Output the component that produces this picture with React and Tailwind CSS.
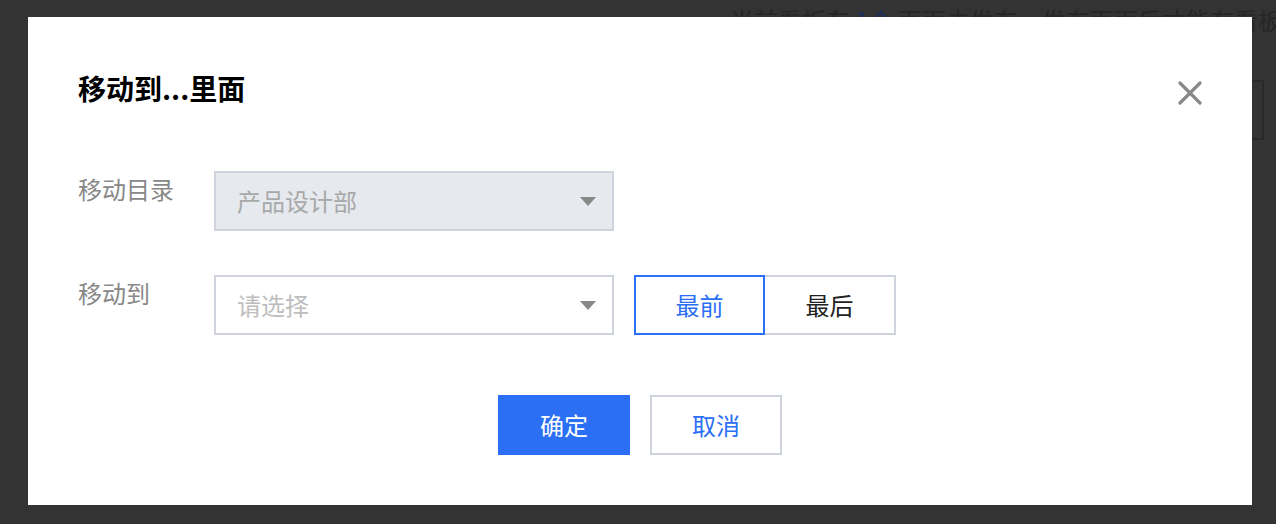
import React, { useState } from 'react';

const font = { fontFamily: '"Noto Sans CJK SC", "Noto Sans", sans-serif' };

function Caret() {
  return (
    <svg width="16" height="9" viewBox="0 0 16 9" className="shrink-0">
      <path d="M0 0 H16 L8 9 Z" fill="#888888" />
    </svg>
  );
}

function Select({ value, placeholder, disabled }) {
  return (
    <div
      className={`w-[400px] h-[60px] border-2 border-[#cfd3db] flex items-center justify-between pl-[21px] pr-[16px] ${
        disabled ? 'bg-[#e6e9ee]' : 'bg-white'
      }`}
    >
      <span className={`text-[24px] leading-[36px] ${disabled ? 'text-[#a8a8a8]' : 'text-[#bdbdbd]'}`}>
        {value || placeholder}
      </span>
      <Caret />
    </div>
  );
}

export default function App() {
  const [pos, setPos] = useState('first');

  return (
    <div className="relative w-[1276px] h-[524px] overflow-hidden bg-[#333333]" style={font}>
      {/* page behind the overlay */}
      <div className="absolute top-[2px] left-[730px] whitespace-nowrap text-[24px] leading-[36px] text-[#262626]">
        当前看板有 <span className="text-[#1c2e5c]">1个</span> 页面未发布，发布页面后才能在看板
      </div>
      <div className="absolute top-[80px] left-[1100px] w-[164px] h-[60px] border-2 border-[#292929]" />

      {/* modal */}
      <div className="absolute left-[28px] top-[17px] w-[1224px] h-[488px] bg-white px-[50px] pt-[50px] pb-[50px] flex flex-col">
        <div className="flex items-center justify-between h-[42px]">
          <h1 className="text-[28px] leading-[42px] font-bold text-black">移动到...里面</h1>
          <svg width="24" height="24" viewBox="0 0 24 24" className="mt-[10px]">
            <path d="M2 2 L22 22 M22 2 L2 22" stroke="#888888" strokeWidth="3.2" strokeLinecap="round" />
          </svg>
        </div>

        <div className="mt-[62px] flex flex-col gap-[44px]">
          <div className="flex items-start">
            <div className="w-[136px] text-[24px] leading-[36px] text-[#888888]">移动目录</div>
            <Select value="产品设计部" disabled />
          </div>
          <div className="flex items-start">
            <div className="w-[136px] text-[24px] leading-[36px] text-[#888888]">移动到</div>
            <Select placeholder="请选择" />
            <div className="flex ml-[20px]">
              <button
                onClick={() => setPos('first')}
                className={`w-[131px] h-[60px] border-2 text-[24px] ${
                  pos === 'first' ? 'border-[#2b6ff5] text-[#2b6ff5]' : 'border-[#cfd3db] border-r-0 text-[#222]'
                }`}
              >
                最前
              </button>
              <button
                onClick={() => setPos('last')}
                className={`w-[131px] h-[60px] border-2 text-[24px] ${
                  pos === 'last' ? 'border-[#2b6ff5] text-[#2b6ff5]' : 'border-[#cfd3db] border-l-0 text-[#222]'
                }`}
              >
                最后
              </button>
            </div>
          </div>
        </div>

        <div className="mt-[60px] flex justify-center gap-[20px]">
          <button className="w-[132px] h-[60px] bg-[#2b6ff5] text-white text-[24px]">确定</button>
          <button className="w-[132px] h-[60px] border-2 border-[#cfd3db] bg-white text-[#2b6ff5] text-[24px]">取消</button>
        </div>
      </div>
    </div>
  );
}
